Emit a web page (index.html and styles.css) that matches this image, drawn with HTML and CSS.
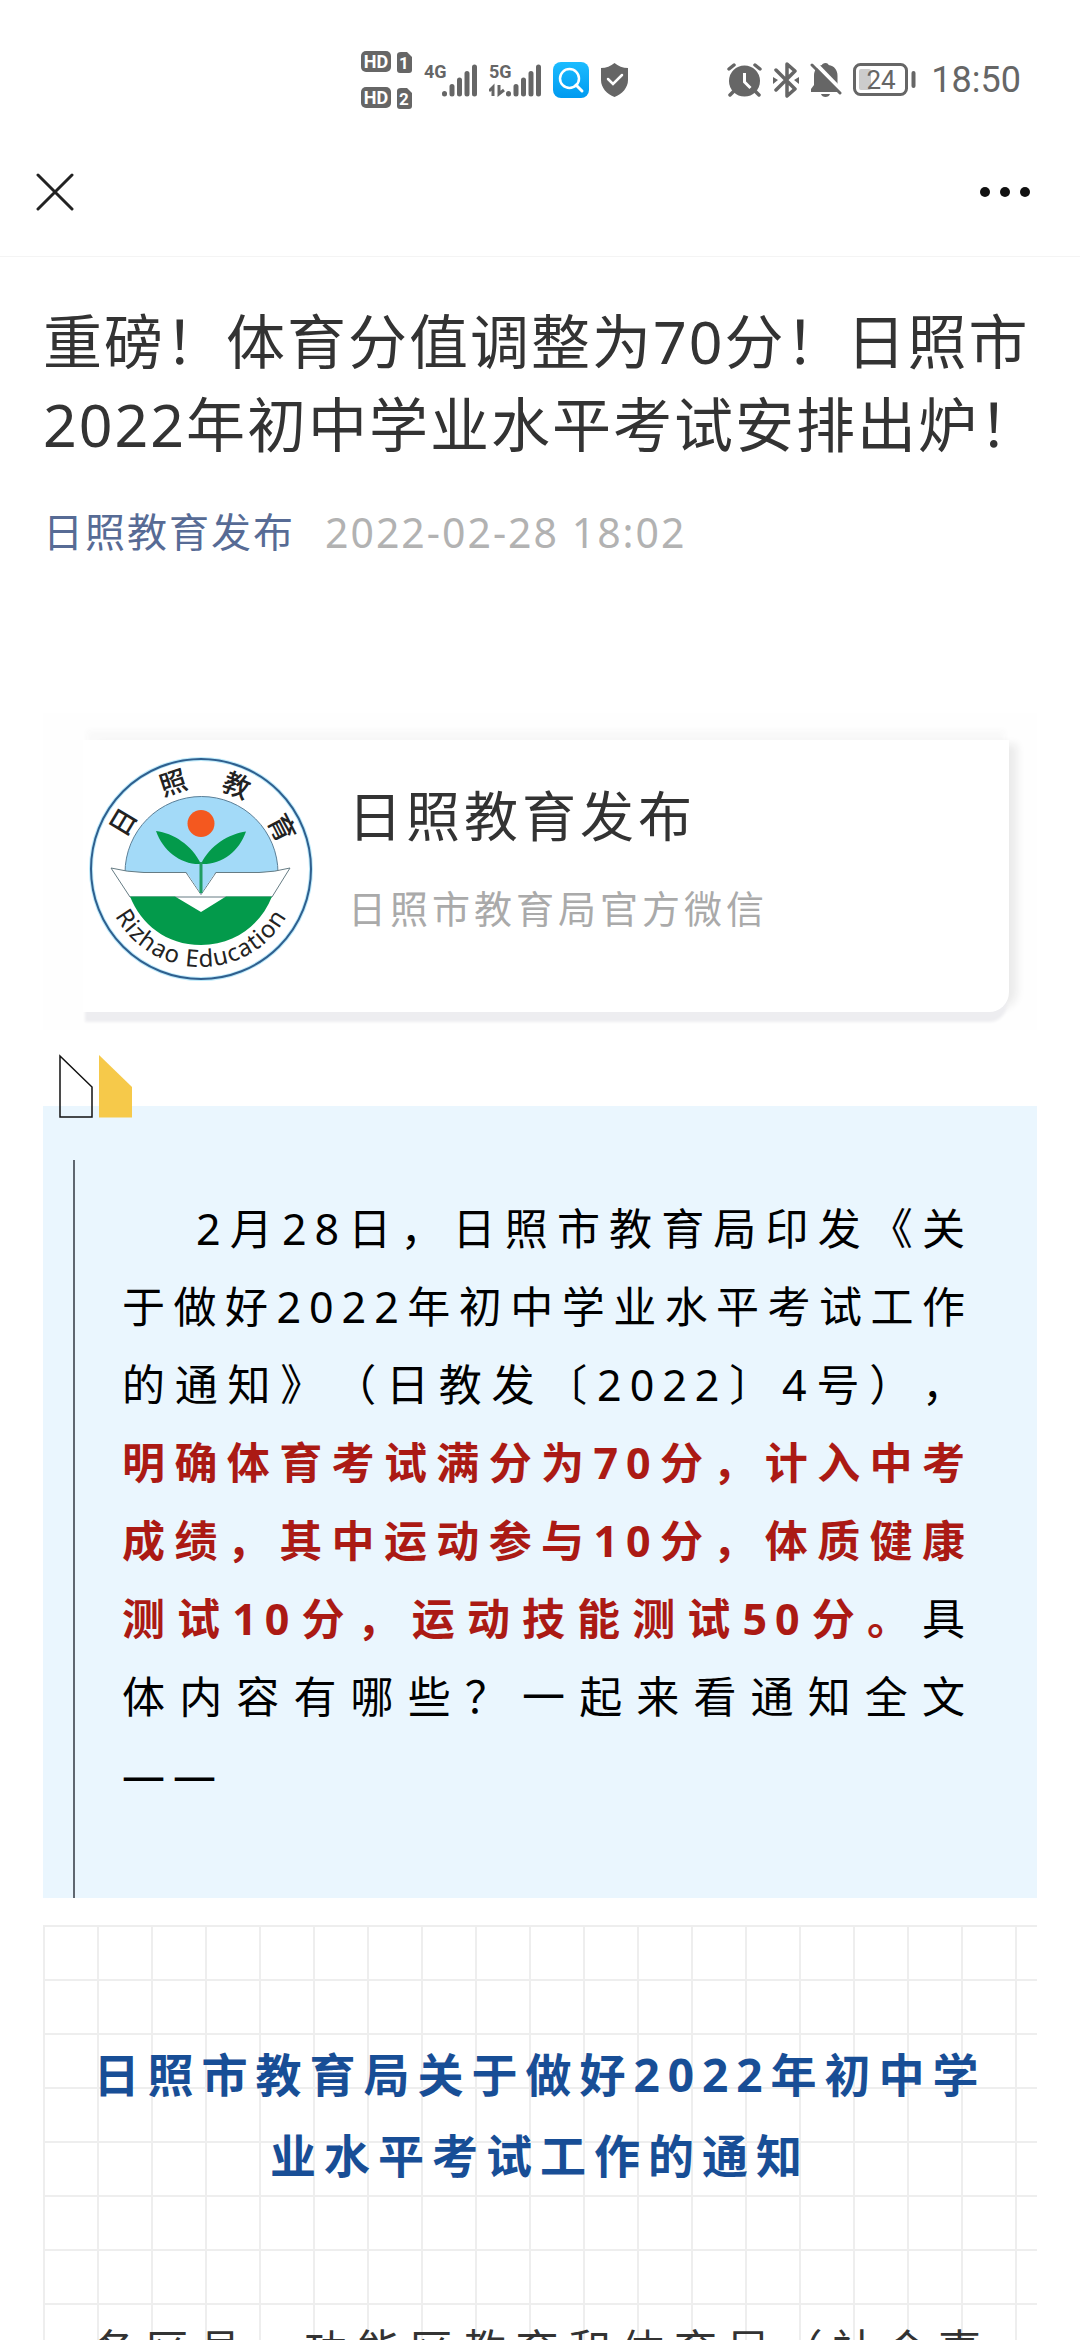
FILE: index.html
```html
<!DOCTYPE html>
<html lang="zh-CN">
<head>
<meta charset="utf-8">
<meta name="viewport" content="width=device-width, initial-scale=1">
<title>日照教育发布</title>
<link rel="stylesheet" href="styles.css">
</head>
<body>
<div class="screen">
  <div class="status">
    <div class="status-group status-network">
      <svg class="icon" width="51" height="58" viewBox="0 0 51 58">
        <rect x="0" y="0" width="30" height="21" rx="5" fill="#666"/>
        <text class="hd" x="15" y="17" text-anchor="middle">HD</text>
        <path d="M40 1h6l5 5v13q0 3-3 3h-9q-3 0-3-3V4q0-3 4-3z" fill="#666"/>
        <text class="sim" x="43" y="18" text-anchor="middle">1</text>
        <rect x="0" y="36" width="30" height="21" rx="5" fill="#666"/>
        <text class="hd" x="15" y="53" text-anchor="middle">HD</text>
        <path d="M40 37h6l5 5v13q0 3-3 3h-9q-3 0-3-3V40q0-3 4-3z" fill="#666"/>
        <text class="sim" x="43" y="54" text-anchor="middle">2</text>
      </svg>
      <svg class="icon" width="53" height="39" viewBox="0 -2 53 39">
        <text class="net" x="0" y="15">4G</text>
        <path class="bars" d="M20.500 30.500v.5M28 23.500V31M35.500 17V31M43 10.500V31M50.500 4V31"/>
      </svg>
      <svg class="icon" width="52" height="39" viewBox="0 -2 52 39">
        <text class="net" x="0" y="15">5G</text>
        <path d="M0 28l4-4v9M10 22v9l5-4" fill="none" stroke="#666" stroke-width="3"/>
        <path class="bars" d="M19.500 30.500v.5M27 23.500V31M34.500 17V31M42 10.500V31M49.500 4V31"/>
      </svg>
      <svg class="icon" width="36" height="36" viewBox="0 0 36 36">
        <defs><linearGradient id="sky" x1="0" y1="0" x2="0" y2="1"><stop offset="0" stop-color="#1cbcff"/><stop offset="1" stop-color="#009af0"/></linearGradient></defs>
        <rect width="36" height="36" rx="8" fill="url(#sky)"/>
        <circle cx="16.500" cy="16.500" r="9.500" fill="none" stroke="#fff" stroke-width="2.500"/>
        <path d="M23 23l6 6" stroke="#fff" stroke-width="3" stroke-linecap="round"/>
      </svg>
      <svg class="icon" width="27" height="34" viewBox="0 0 27 34">
        <path d="M13.500 0C17 3 22 5 27 5v12c0 8-6 14-13.500 17C6 31 0 25 0 17V5c5 0 10-2 13.500-5z" fill="#666"/>
        <path d="M7 16l5 5 9-9" fill="none" stroke="#fff" stroke-width="2.500" stroke-linecap="round"/>
      </svg>
    </div>
    <div class="status-group">
      <svg class="icon" width="35" height="34" viewBox="0 0 35 34">
        <circle cx="17.500" cy="18" r="15.500" fill="#666"/>
        <path d="M2 6l5-4M33 6l-5-4M3 32l4-4M32 32l-4-4" stroke="#666" stroke-width="3.500" stroke-linecap="round"/>
        <path d="M17.500 10v9l6 6" fill="none" stroke="#fff" stroke-width="3"/>
      </svg>
      <svg class="icon" width="26" height="36" viewBox="0 0 26 36">
        <path d="M3 8l19 19-8 7V2l8 7L3 28" fill="none" stroke="#666" stroke-width="3.500" stroke-linejoin="round" stroke-linecap="round"/>
        <path d="M0 15l5 3-5 4zM26 15l-5 3 5 4z" fill="#666"/>
      </svg>
      <svg class="icon" width="32" height="36" viewBox="0 0 32 36">
        <path d="M15.500 1c2 0 3 1 3 2 6 1 9 5 9 11v9l2 5v2H1v-3l3-4v-9C4 8 7 4 12 3c0-1 1.500-2 3.500-2zM11 32h9c-1 4-8 4-9 0z" fill="#666"/>
        <path d="M4 0l28 29" stroke="#fff" stroke-width="4"/>
        <path d="M2 3l28 28" stroke="#666" stroke-width="3" stroke-linecap="round"/>
      </svg>
      <svg class="icon" width="63" height="34" viewBox="0 0 63 34">
        <rect x="1.500" y="1.500" width="52" height="30" rx="6" fill="none" stroke="#666" stroke-width="3"/>
        <rect x="6" y="6" width="12" height="21" rx="2" fill="#ccc"/>
        <rect x="58.500" y="8" width="4" height="17" rx="2" fill="#666"/>
        <text class="level" x="28" y="26" text-anchor="middle">24</text>
      </svg>
      <time class="clock">18:50</time>
    </div>
  </div>

  <header class="nav">
    <button class="nav-button" type="button" aria-label="关闭">
      <svg class="icon" width="38" height="38" viewBox="0 0 38 38"><path d="M2 2l34 34M36 2L2 36" stroke="#222" stroke-width="3" stroke-linecap="round"/></svg>
    </button>
    <button class="nav-button" type="button" aria-label="更多">
      <svg class="icon" width="50" height="38" viewBox="0 0 50 38" fill="#111"><circle cx="5" cy="19" r="5"/><circle cx="25" cy="19" r="5"/><circle cx="45" cy="19" r="5"/></svg>
    </button>
  </header>

  <main class="article">
    <h1 class="title">重磅！体育分值调整为70分！日照市2022年初中学业水平考试安排出炉！</h1>
    <div class="meta">
      <a class="author" href="#">日照教育发布</a>
      <time class="date">2022-02-28 18:02</time>
    </div>

    <section class="card">
      <div class="card-panel">
        <svg class="icon" width="224" height="224" viewBox="0 0 224 224">
          <defs><path id="ring" d="M14 112A98 98 0 0 0 210 112"/></defs>
          <circle cx="112" cy="112" r="110" fill="#fff" stroke="#bdeafb" stroke-width="4"/>
          <circle cx="112" cy="112" r="110" fill="none" stroke="#2f5f8e" stroke-width="2"/>
          <path d="M36 116a76 76 0 0 1 153 0z" fill="#a3daf8" stroke="#5b7f97" stroke-width="1"/>
          <path d="M22 111q16 4 33 4.500h42l15 22 15-22h43q16-.5 31-4.500l-18 29H41z" fill="#fff" stroke="#667c84" stroke-width="1"/>
          <path d="M97.500 115l14.500 22 14.500-22z" fill="#a3daf8"/>
          <path d="M41 139.500h45l26 15.500 25-15.500h46C172 167 147 188 112 188S52 167 41 139.500z" fill="#039a4b"/>
          <circle cx="112" cy="66.500" r="13.500" fill="#f4581f"/>
          <path d="M67 74C84 76 103 88 112 107 92 108 74 94 67 74zM157 74.500C140 77 121 88 112 107c20 1 38-12 45-32.500z" fill="#039a4b"/>
          <path d="M112 105v31" stroke="#1f9d62" stroke-width="3"/>
          <g class="seal" text-anchor="middle">
            <text transform="rotate(-59 112 112)" x="112" y="31">日</text>
            <text transform="rotate(-18 112 112)" x="112" y="31">照</text>
            <text transform="rotate(23 112 112)" x="112" y="31">教</text>
            <text transform="rotate(63 112 112)" x="112" y="31">育</text>
          </g>
          <text class="seal-latin" text-anchor="middle"><textPath href="#ring" startOffset="50%">Rizhao Education</textPath></text>
        </svg>
        <div class="card-text">
          <p class="card-name">日照教育发布</p>
          <p class="card-note">日照市教育局官方微信</p>
        </div>
      </div>
    </section>

    <section class="quote">
      <svg class="quote-mark" width="75" height="64" viewBox="0 0 75 64">
        <path d="M1 2L33 33V63H1z" fill="none" stroke="#111" stroke-width="1.500"/>
        <path d="M40 1L73 33V63.500H40z" fill="#f6c94a"/>
      </svg>
      <p class="quote-text">2月28日，日照市教育局印发《关于做好2022年初中学业水平考试工作的通知》（日教发〔2022〕4号），<strong class="key">明确体育考试满分为70分，计入中考成绩，其中运动参与10分，体质健康测试10分，运动技能测试50分。</strong>具<span class="keep">体内容</span>有哪些？一起来看通知全文——</p>
    </section>

    <section class="notice">
      <h2 class="notice-title">日照市教育局关于做好2022年初中学业水平考试工作的通知</h2>
      <p class="notice-text">各区县、功能区教育和体育局（社会事</p>
    </section>
  </main>
</div>
</body>
</html>
```
FILE: styles.css
```css
* {
  box-sizing: border-box;
}

html,
body {
  height: 100%;
  margin: 0;
}

body {
  background: #fff;
  color: #333;
  font-family: "Noto Sans", "Noto Sans CJK SC", sans-serif;
  text-spacing-trim: space-all;
}

h1,
h2,
p {
  margin: 0;
  font-weight: 400;
}

.screen {
  display: flex;
  flex-direction: column;
  height: 100vh;
  overflow: hidden;
}

.icon {
  display: block;
  flex: none;
}

/* Status bar */
.status {
  display: flex;
  flex: none;
  align-items: center;
  justify-content: flex-end;
  gap: 99px;
  height: 128px;
  padding: 32px 59px 0 0;
  color: #666;
  font-family: Roboto, sans-serif;
}

.status-group {
  display: flex;
  align-items: center;
  gap: 11px;
}

.status-network {
  gap: 12px;
}

.status text {
  fill: #666;
}

.status .hd {
  fill: #fff;
  font-size: 18px;
  font-weight: 700;
}

.status .sim {
  fill: #fff;
  font-size: 17px;
  font-weight: 700;
}

.net {
  font-size: 18px;
  font-weight: 700;
}

.level {
  font-size: 26px;
}

.bars {
  fill: none;
  stroke: #666;
  stroke-width: 5;
  stroke-linecap: round;
}

.clock {
  margin-left: 4px;
  font-size: 36px;
  line-height: 40px;
}

/* Navigation bar */
.nav {
  display: flex;
  flex: none;
  align-items: center;
  justify-content: space-between;
  height: 129px;
  padding: 0 50px 0 36px;
  border-bottom: 1px solid #f4f4f4;
}

.nav-button {
  padding: 0;
  border: 0;
  background: none;
}

/* Article */
.article {
  flex: 1;
  min-height: 0;
  padding: 43px 43px 0;
  overflow-y: auto;
  scrollbar-width: none;
}

.title {
  margin-right: -10px;
  font-size: 59px;
  line-height: 83px;
  letter-spacing: 2px;
}

.meta {
  display: flex;
  gap: 30px;
  margin-top: 40px;
  font-size: 40px;
  line-height: 52px;
  letter-spacing: 2px;
}

.author {
  color: #576b95;
  text-decoration: none;
}

.date {
  color: #b2b2b2;
  font-size: 41px;
}

/* Account card */
.card {
  margin-top: 155px;
  padding: 27px 28px 18px 40px;
  background: #fefefe;
}

.card-panel {
  display: flex;
  align-items: center;
  gap: 35px;
  height: 272px;
  padding: 0 0 14px 6px;
  border-radius: 0 0 20px 0;
  background: #fff;
  box-shadow: 0 12px 3px -2px #ededf0, 12px 0 8px -4px #ebebeb, 0 -14px 6px -4px #f9f9f9;
}

.card-text {
  display: flex;
  flex-direction: column;
  gap: 32px;
  padding-bottom: 14px;
}

.card-name {
  font-size: 54px;
  line-height: 60px;
  letter-spacing: 4px;
}

.card-note {
  color: #aaa;
  font-size: 38px;
  line-height: 60px;
  letter-spacing: 4px;
}

.seal {
  fill: #222;
  font-size: 27px;
  font-weight: 500;
}

.seal-latin {
  fill: #222;
  font-size: 24px;
  letter-spacing: 1px;
}

/* Lead paragraph */
.quote {
  position: relative;
  margin-top: 76px;
  padding: 54px 0 0 30px;
  background: #eaf6fe;
}

.quote-mark {
  position: absolute;
  top: -52px;
  left: 16px;
}

.quote-text {
  padding: 30px 64px 84px 47px;
  border-left: 2px solid #5f6770;
  color: #000;
  font-size: 43px;
  line-height: 78px;
  letter-spacing: 8px;
  text-align: justify;
  text-indent: 74px;
}

.key {
  color: #ab1a14;
  font-weight: 700;
}

.keep {
  white-space: nowrap;
}

/* Notice on squared paper */
.notice {
  margin-top: 27px;
  padding: 109px 40px 54px;
  background-image: linear-gradient(#eee 2px, transparent 2px), linear-gradient(90deg, #eee 2px, transparent 2px);
  background-size: 54px 54px;
}

.notice-title {
  color: #184e96;
  font-size: 46px;
  font-weight: 700;
  line-height: 81px;
  letter-spacing: 8px;
  text-align: center;
}

.notice-text {
  margin-top: 115px;
  padding: 0 8px 0 10px;
  font-size: 43px;
  line-height: 78px;
  letter-spacing: 8px;
  text-align: justify;
  text-align-last: justify;
}
```
